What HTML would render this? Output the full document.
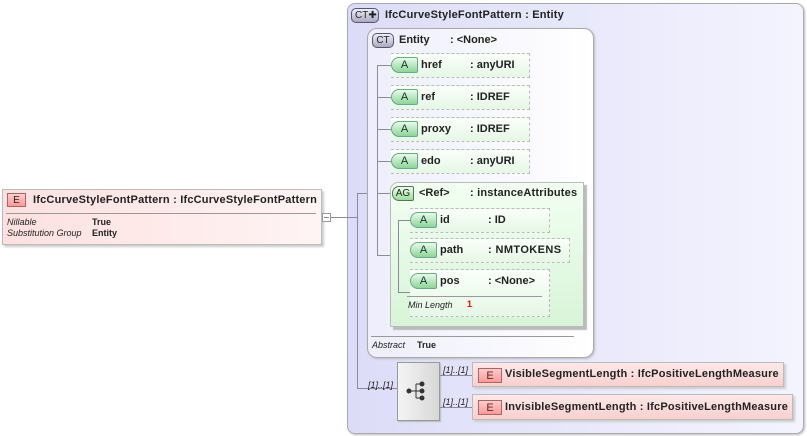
<!DOCTYPE html>
<html><head><style>
*{margin:0;padding:0;box-sizing:border-box}
body{width:807px;height:436px;background:#fff;font-family:"Liberation Sans",sans-serif;position:relative;overflow:hidden;font-size:11px;color:#222}
.a{position:absolute}
.b{font-weight:bold}
.attr{position:absolute;height:25px;border:1px dashed #bbb;border-left:none;background:linear-gradient(#fafffa,#e6f7e6);}
.attr .tag{position:absolute;left:0;top:3px;width:27px;height:16px;border:1px solid #6a8;border-radius:8px 2px 2px 8px;background:linear-gradient(#e8fbe8,#8fd49a);font-size:11px;text-align:center;line-height:15px;color:#133}
.attr .n{position:absolute;left:30px;top:5px;font-weight:bold}
.attr .t{position:absolute;top:5px;font-weight:bold}
.el{position:absolute;height:25px;border:1px solid #bbb;background:linear-gradient(#fde8e8,#f9d0d0);box-shadow:2px 2px 2px #ccc}
.el .tag{position:absolute;left:5px;top:5px;width:24px;height:15px;border:1px solid #a66;background:linear-gradient(#fcc,#f99);text-align:center;font-size:11px;line-height:14px;color:#622}
.ln{position:absolute;background:#8a8a99}
.m{font-style:italic;font-size:9px}
</style></head><body>
<div class="a" style="left:2px;top:189px;width:320px;height:56px;border:1px solid #bbb;background:linear-gradient(90deg,#fde0e0,#fff4f4);box-shadow:2px 2px 2px #ccc"></div>
<div class="a" style="left:7px;top:193px;width:19px;height:14px;border:1px solid #a66;background:linear-gradient(#fcc,#f99);font-size:10px;text-align:center;line-height:13px">E</div>
<div class="a b" style="left:33px;top:194px;font-size:11px;letter-spacing:0.2px">IfcCurveStyleFontPattern : IfcCurveStyleFontPattern</div>
<div class="a" style="left:6px;top:213px;width:310px;height:1px;background:#999"></div>
<div class="a m" style="left:7px;top:217px">Nillable</div>
<div class="a b" style="left:92px;top:217px;font-size:9px">True</div>
<div class="a m" style="left:7px;top:228px">Substitution Group</div>
<div class="a b" style="left:92px;top:228px;font-size:9px">Entity</div>
<div class="a" style="left:322px;top:213px;width:9px;height:9px;border:1px solid #999;background:#fff"></div>
<div class="ln" style="left:324px;top:217px;width:5px;height:1px"></div>
<div class="ln" style="left:331px;top:217px;width:16px;height:1px"></div>
<div class="a" style="left:347px;top:3px;width:457px;height:431px;border:1px solid #aaa;border-radius:8px;background:linear-gradient(90deg,#dcdcf8,#f4f4fe);box-shadow:1px 1px 2px #bbb"></div>
<div class="a" style="left:351px;top:8px;width:28px;height:15px;border:1px solid #557;border-radius:5px;background:linear-gradient(#eef,#aab);font-size:10px;line-height:13px;padding-left:3px">CT✚</div>
<div class="a b" style="left:385px;top:9px;letter-spacing:0.2px">IfcCurveStyleFontPattern : Entity</div>
<div class="ln" style="left:347px;top:217px;width:10px;height:1px"></div>
<div class="ln" style="left:357px;top:193px;width:1px;height:196px"></div>
<div class="ln" style="left:357px;top:193px;width:18px;height:1px"></div>
<div class="ln" style="left:357px;top:388px;width:40px;height:1px"></div>
<div class="a m" style="left:368px;top:380px">[1]..[1]</div>
<div class="a" style="left:367px;top:28px;width:227px;height:330px;border:1px solid #aaa;border-radius:10px;background:linear-gradient(90deg,#eeeefc,#fff);box-shadow:1px 1px 2px #bbb"></div>
<div class="a" style="left:372px;top:33px;width:22px;height:15px;border:1px solid #557;border-radius:5px;background:linear-gradient(#eef,#aab);font-size:10px;line-height:13px;text-align:center">CT</div>
<div class="a b" style="left:399px;top:34px">Entity</div>
<div class="a b" style="left:450px;top:34px">: &lt;None&gt;</div>
<div class="ln" style="left:377px;top:65px;width:1px;height:191px"></div>
<div class="ln" style="left:377px;top:65px;width:14px;height:1px"></div>
<div class="ln" style="left:377px;top:97px;width:14px;height:1px"></div>
<div class="ln" style="left:377px;top:129px;width:14px;height:1px"></div>
<div class="ln" style="left:377px;top:161px;width:14px;height:1px"></div>
<div class="ln" style="left:377px;top:193px;width:14px;height:1px"></div>
<div class="ln" style="left:377px;top:255px;width:30px;height:1px"></div>
<div class="attr" style="left:391px;top:53px;width:139px"><div class="tag">A</div><div class="n">href</div><div class="t" style="left:79px">: anyURI</div></div>
<div class="attr" style="left:391px;top:85px;width:139px"><div class="tag">A</div><div class="n">ref</div><div class="t" style="left:79px">: IDREF</div></div>
<div class="attr" style="left:391px;top:117px;width:139px"><div class="tag">A</div><div class="n">proxy</div><div class="t" style="left:79px">: IDREF</div></div>
<div class="attr" style="left:391px;top:149px;width:139px"><div class="tag">A</div><div class="n">edo</div><div class="t" style="left:79px">: anyURI</div></div>
<div class="a" style="left:390px;top:182px;width:194px;height:145px;border:1px solid #bbb;border-radius:8px 0 0 0;background:linear-gradient(#f2fff2,#d8f4d8);box-shadow:3px 3px 1px #bbb"></div>
<div class="a" style="left:392px;top:186px;width:22px;height:15px;border:1px solid #575;border-radius:7px 2px 2px 7px;background:linear-gradient(#efe,#9d9);font-size:10px;line-height:13px;text-align:center">AG</div>
<div class="a b" style="left:419px;top:187px">&lt;Ref&gt;</div>
<div class="a b" style="left:470px;top:187px;letter-spacing:0.2px">: instanceAttributes</div>
<div class="ln" style="left:398px;top:220px;width:1px;height:73px"></div>
<div class="ln" style="left:398px;top:220px;width:12px;height:1px"></div>
<div class="ln" style="left:398px;top:292px;width:12px;height:1px"></div>
<div class="attr" style="left:410px;top:208px;width:140px"><div class="tag">A</div><div class="n">id</div><div class="t" style="left:78px">: ID</div></div>
<div class="attr" style="left:410px;top:238px;width:160px"><div class="tag">A</div><div class="n">path</div><div class="t" style="left:78px;letter-spacing:0.4px">: NMTOKENS</div></div>
<div class="attr" style="left:410px;top:269px;width:140px;height:48px"><div class="tag">A</div><div class="n">pos</div><div class="t" style="left:78px">: &lt;None&gt;</div>
<div class="a" style="left:-3px;top:26px;width:135px;height:1px;background:#999"></div>
<div class="a m" style="left:-2px;top:30px">Min Length</div><div class="a b" style="left:57px;top:29px;color:#e00;font-size:9px">1</div></div>
<div class="a" style="left:371px;top:336px;width:203px;height:1px;background:#999"></div>
<div class="a m" style="left:372px;top:340px">Abstract</div>
<div class="a b" style="left:417px;top:340px;font-size:9px">True</div>
<div class="a" style="left:397px;top:362px;width:43px;height:59px;border:1px solid #999;background:linear-gradient(90deg,#f4f4f4,#d8d8d8);box-shadow:1px 1px 1px #bbb"></div>
<svg class="a" style="left:404px;top:380px" width="24" height="22"><g fill="#333" stroke="#333"><circle cx="5" cy="11" r="2"/><line x1="5" y1="11" x2="12" y2="11"/><line x1="12" y1="4" x2="12" y2="18"/><line x1="12" y1="4" x2="18" y2="4"/><line x1="12" y1="11" x2="18" y2="11"/><line x1="12" y1="18" x2="18" y2="18"/><circle cx="18" cy="4" r="2"/><circle cx="18" cy="11" r="2"/><circle cx="18" cy="18" r="2"/></g></svg>
<div class="ln" style="left:440px;top:375px;width:32px;height:1px"></div>
<div class="ln" style="left:440px;top:407px;width:32px;height:1px"></div>
<div class="a m" style="left:443px;top:365px">[1]..[1]</div>
<div class="a m" style="left:443px;top:397px">[1]..[1]</div>
<div class="el" style="left:472px;top:362px;width:312px"><div class="tag">E</div><div class="a b" style="left:32px;top:5px;letter-spacing:0.2px">VisibleSegmentLength : IfcPositiveLengthMeasure</div></div>
<div class="el" style="left:472px;top:394px;width:321px;height:26px"><div class="tag">E</div><div class="a b" style="left:32px;top:6px;letter-spacing:0.2px">InvisibleSegmentLength : IfcPositiveLengthMeasure</div></div>
</body></html>
